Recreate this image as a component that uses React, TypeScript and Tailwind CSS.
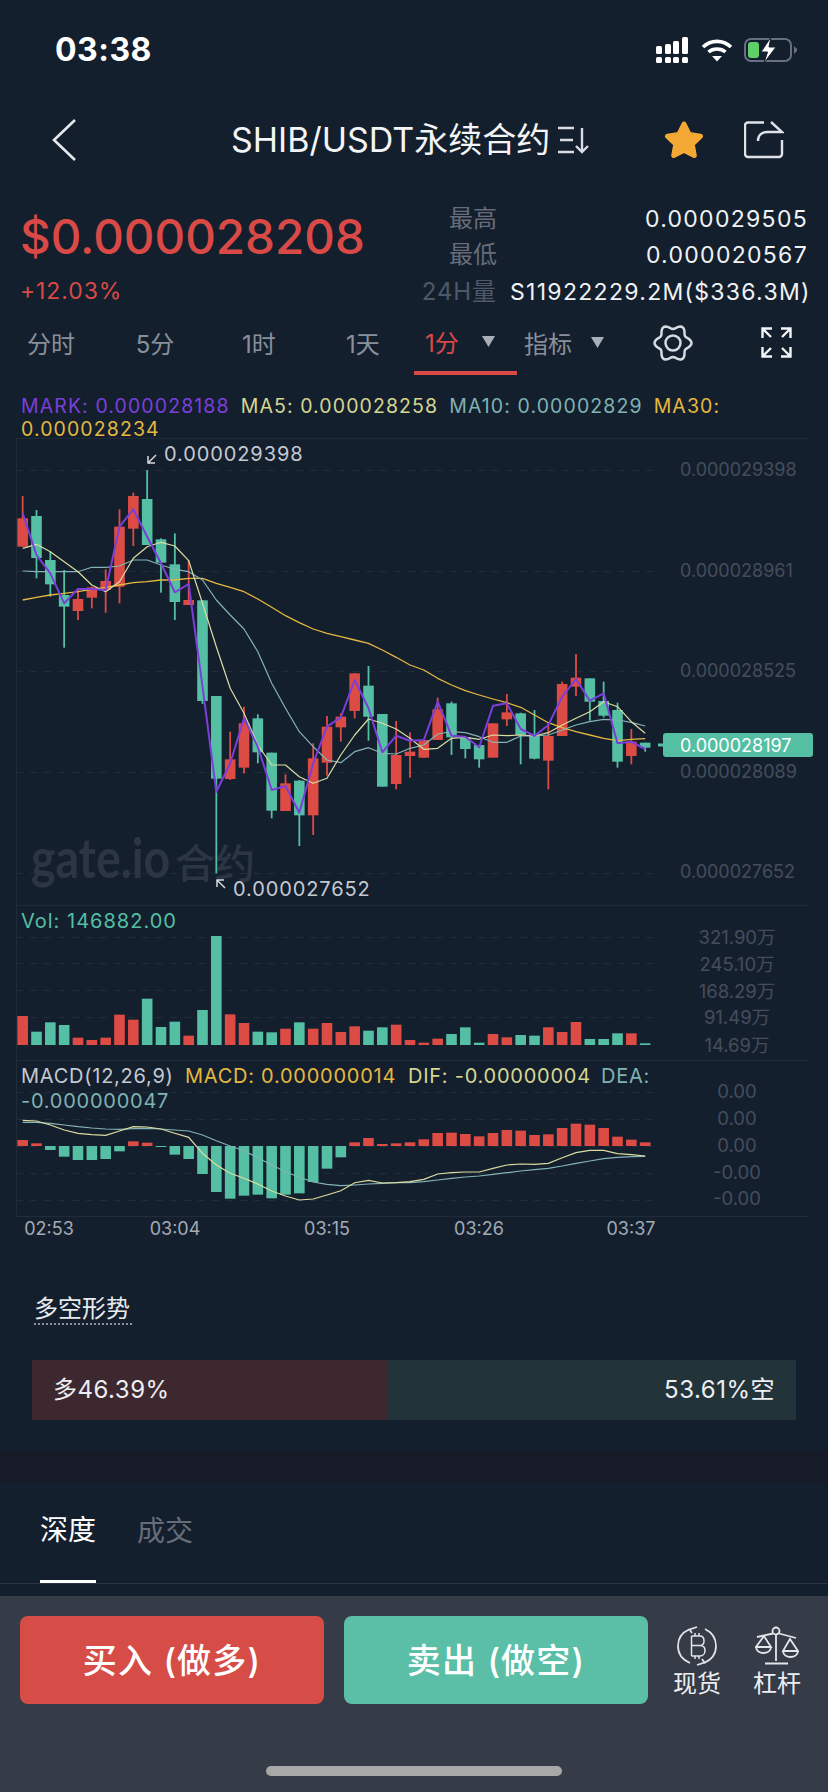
import React from "react";

const UP = "#dd4b45";
const DN = "#55bfa4";

// [colour, wickTop, wickBottom, bodyTop, bodyBottom] in 3x crop coordinates
const candles: [string, number, number, number, number][] = [
  ["r", 198, 350, 265, 350], ["g", 240, 445, 258, 384], ["g", 365, 500, 390, 463], ["g", 420, 653, 495, 530],
  ["r", 475, 570, 507, 543], ["r", 470, 535, 472, 503], ["r", 418, 548, 453, 480], ["r", 238, 520, 290, 470],
  ["r", 188, 348, 198, 296], ["g", 120, 345, 207, 345], ["g", 325, 488, 328, 398], ["g", 310, 570, 403, 516],
  ["r", 390, 525, 510, 525], ["g", 510, 822, 511, 813], ["g", 798, 1330, 798, 1046], ["r", 905, 1050, 988, 1047],
  ["r", 830, 1030, 880, 1013], ["g", 853, 1000, 865, 967], ["g", 968, 1165, 968, 1142], ["r", 1033, 1143, 1060, 1143],
  ["g", 1050, 1248, 1052, 1156], ["r", 940, 1215, 985, 1156], ["r", 858, 1037, 890, 998], ["r", 850, 935, 860, 892],
  ["r", 730, 865, 730, 843], ["g", 708, 932, 767, 860], ["g", 852, 1070, 852, 1070], ["r", 873, 1078, 975, 1062],
  ["r", 907, 1043, 965, 978], ["r", 930, 983, 930, 983], ["r", 803, 930, 838, 930], ["g", 815, 975, 820, 922],
  ["g", 922, 985, 922, 957], ["g", 945, 1013, 945, 988], ["r", 880, 983, 880, 983], ["r", 792, 888, 847, 868],
  ["g", 848, 1003, 850, 915], ["g", 840, 988, 918, 986], ["r", 880, 1078, 918, 992], ["r", 755, 918, 762, 918],
  ["r", 672, 798, 743, 770], ["g", 745, 872, 745, 815], ["g", 755, 862, 813, 857], ["g", 818, 1013, 840, 995],
  ["r", 897, 1003, 935, 978], ["g", 938, 965, 938, 953],
];

const xAt = (i: number) => (68 + i * 41.5) / 3;

const mark = [250, 375, 430, 520, 477, 477, 480, 290, 238, 320, 400, 487, 462, 770, 1085, 1000, 865, 950, 1080, 1068, 1148, 1000, 890, 862, 750, 835, 967, 917, 932, 930, 815, 917, 920, 952, 827, 820, 897, 918, 885, 800, 747, 812, 790, 940, 935, 957];
const ma5 = [355, 343, 365, 395, 425, 465, 485, 455, 385, 350, 337, 348, 392, 520, 650, 775, 850, 945, 1005, 1005, 1040, 1060, 1045, 975, 915, 867, 880, 897, 925, 958, 955, 925, 922, 928, 915, 917, 915, 918, 908, 885, 865, 845, 815, 830, 875, 910];
const ma10 = [423, 425, 425, 425, 425, 412, 412, 408, 390, 390, 405, 418, 425, 450, 510, 555, 597, 665, 760, 835, 905, 950, 990, 998, 965, 953, 970, 972, 955, 945, 912, 905, 908, 920, 937, 937, 918, 918, 915, 900, 885, 875, 868, 870, 877, 888];
const ma30 = [510, 502, 495, 490, 485, 478, 472, 465, 458, 455, 450, 450, 445, 445, 460, 472, 485, 507, 532, 557, 578, 597, 610, 620, 630, 640, 660, 682, 705, 720, 745, 765, 782, 795, 807, 818, 832, 855, 878, 893, 905, 915, 925, 932, 928, 926];

const volTops: [string, number][] = [
  ["r", 348], ["g", 395], ["g", 367], ["g", 375], ["r", 413], ["r", 420], ["r", 413], ["r", 344], ["r", 359], ["g", 296], ["g", 381], ["g", 365], ["r", 407], ["g", 330], ["g", 108], ["r", 343], ["r", 369], ["g", 395], ["g", 397], ["r", 386], ["g", 367], ["r", 386], ["r", 369], ["r", 396], ["r", 379], ["g", 392], ["g", 382], ["r", 374], ["r", 420], ["r", 428], ["r", 416], ["g", 402], ["g", 382], ["g", 428], ["r", 402], ["r", 412], ["g", 405], ["g", 407], ["r", 382], ["r", 396], ["r", 366], ["g", 417], ["g", 417], ["g", 400], ["r", 400], ["g", 430],
];

const macdBars = [720, 730, 750, 770, 780, 780, 777, 754, 724, 728, 741, 764, 777, 822, 876, 896, 887, 884, 895, 884, 880, 846, 806, 772, 727, 714, 732, 730, 727, 718, 699, 698, 702, 709, 699, 690, 692, 705, 703, 684, 671, 674, 684, 710, 719, 727];
const dif = [661, 663, 675, 690, 700, 704, 706, 693, 680, 681, 687, 700, 712, 760, 795, 820, 835, 852, 873, 888, 900, 897, 885, 872, 848, 841, 849, 848, 845, 838, 822, 818, 816, 816, 805, 795, 792, 793, 790, 773, 758, 751, 751, 761, 764, 768];
const dea = [667, 667, 670, 675, 680, 684, 687, 688, 686, 685, 687, 690, 693, 705, 722, 738, 752, 773, 795, 815, 832, 846, 853, 857, 855, 852, 850, 848, 848, 845, 840, 835, 831, 828, 823, 818, 813, 809, 805, 798, 790, 783, 776, 772, 770, 769];

const py = (z: number) => z / 3 - 8;
const vy = (z: number) => z / 3 + 462;

const line = (vals: number[], conv: (z: number) => number) =>
  vals.map((v, i) => `${xAt(i).toFixed(1)},${conv(v).toFixed(1)}`).join(" ");

const gearPath = (() => {
  const pts: string[] = [];
  for (let a = 0; a < 360; a += 5) {
    const t = (a * Math.PI) / 180;
    const r = 16.2 + 2.3 * Math.cos(6 * t);
    pts.push(`${(20 + r * Math.cos(t)).toFixed(2)},${(20 + r * Math.sin(t)).toFixed(2)}`);
  }
  return "M" + pts.join("L") + "Z";
})();

function Tri() {
  return (
    <svg width="13" height="11" viewBox="0 0 13 11" className="shrink-0 -mt-[4px]">
      <polygon points="0,0 13,0 6.5,11" fill="#a9afb8" />
    </svg>
  );
}

function StatusBar() {
  return (
    <div className="h-[100px] flex items-center justify-between pl-[55px] pr-[31px] shrink-0">
      <span className="text-[32px] font-bold text-white tracking-[0.5px] -mt-[1px]">03:38</span>
      <div className="flex items-center gap-[12px]">
        <svg width="34" height="26" viewBox="0 0 34 26" fill="#fff">
          <rect x="1" y="20" width="6" height="6" rx="1.5" />
          <rect x="10" y="20" width="6" height="6" rx="1.5" />
          <rect x="18" y="20" width="6" height="6" rx="1.5" />
          <rect x="27" y="20" width="6" height="6" rx="1.5" />
          <rect x="1" y="9" width="6" height="8" rx="1.5" />
          <rect x="10" y="7" width="6" height="10" rx="1.5" />
          <rect x="18" y="4" width="6" height="13" rx="1.5" />
          <rect x="27" y="0" width="6" height="17" rx="1.5" />
        </svg>
        <svg width="32" height="23" viewBox="0 0 32 23" fill="none" stroke="#fff" strokeWidth="3.6">
          <path d="M2 8 C10 0.5 22 0.5 30 8" />
          <path d="M7.5 13 C12 9 20 9 24.5 13" />
          <polygon points="16,22.5 11,17 21,17" fill="#fff" stroke="none" />
        </svg>
        <svg width="53" height="26" viewBox="0 0 53 26" fill="none" className="-ml-[1px]">
          <rect x="1" y="2" width="46" height="22" rx="6" stroke="#667080" strokeWidth="2" />
          <rect x="4" y="5" width="11" height="16" rx="3" fill="#5fd068" />
          <polygon points="50,9 53,12 53,14 50,17" fill="#667080" />
          <polygon points="27,0 17,15 23.5,15 20,26 32,10 25,10" fill="#fff" stroke="#141f2e" strokeWidth="1" />
        </svg>
      </div>
    </div>
  );
}

function NavBar() {
  return (
    <div className="h-[80px] flex items-center relative shrink-0">
      <svg width="26" height="42" viewBox="0 0 26 42" fill="none" className="ml-[52px]">
        <path d="M23 1 L2 21 L23 41" stroke="#e6e9ed" strokeWidth="2.6" />
      </svg>
      <div className="ml-[153px] flex items-center text-[34px] leading-none text-[#f3f5f7] whitespace-nowrap">
        <span>SHIB/USDT永续合约</span>
        <svg width="34" height="28" viewBox="0 0 34 28" fill="none" stroke="#d9dde3" strokeWidth="2.4" className="ml-[7px]">
          <path d="M1 2 H17 M3 14 H16 M1 26 H17" />
          <path d="M25 2 V26 M19 20 L25 26 L31 20" />
        </svg>
      </div>
      <svg width="40" height="40" viewBox="0 0 40 40" className="ml-[auto]">
        <polygon points="20,4 25.2,14.5 36.5,16.2 28.2,24.3 30.3,35.5 20,30.2 9.7,35.5 11.8,24.3 3.5,16.2 14.8,14.5" fill="#f5a935" stroke="#f5a935" strokeWidth="5" strokeLinejoin="round" />
      </svg>
      <svg width="40" height="38" viewBox="0 0 40 38" fill="none" stroke="#dfe3e8" strokeWidth="2.4" className="ml-[40px] mr-[44px]">
        <path d="M20 1.5 H4 a3 3 0 0 0 -3 3 V33 a3 3 0 0 0 3 3 H35 a3 3 0 0 0 3 -3 V19" />
        <path d="M14 20 C14 14 18 11 24 11 H38 L27 1" />
      </svg>
    </div>
  );
}

function Stats() {
  const rows: [string, string][] = [
    ["最高", "0.000029505"],
    ["最低", "0.000020567"],
    ["24H量", "S11922229.2M($336.3M)"],
  ];
  return (
    <div className="h-[110px] flex justify-between pl-[20px] pr-[20px] pt-[1px] shrink-0">
      <div className="flex flex-col">
        <div className="text-[47.5px] leading-[72px] font-medium text-[#d94a46] whitespace-nowrap">$0.000028208</div>
        <div className="text-[23px] leading-[36px] tracking-[0.9px] text-[#d94a46]">+12.03%</div>
      </div>
      <div className="flex flex-col">
        {rows.map(([k, v], i) => (
          <div key={k} className="h-[36.5px] flex items-center justify-between gap-[13px]">
            <span className={`text-[24px] w-[130px] text-right whitespace-nowrap ${i === 2 ? "text-[#4f5866] tracking-[0.9px]" : "text-[#666d78]"}`}>{k}</span>
            <span className="text-[23px] tracking-[1.3px] text-[#f0f2f4] text-right w-[298px] whitespace-nowrap">{v}</span>
          </div>
        ))}
      </div>
    </div>
  );
}

function Tabs() {
  const t = ["分时", "5分", "1时", "1天"];
  return (
    <div className="h-[65px] flex items-center -ml-[1px] text-[24px] text-[#8a909a] shrink-0">
      {t.map((s) => (
        <div key={s} className="w-[104px] text-center pt-[4px]">{s}</div>
      ))}
      <div className="w-[103px] -ml-[1px] h-full flex items-center pl-[11px] gap-[23px] border-b-4 border-[#d94a46] pt-[6px] text-[#d94a46]">
        <span>1分</span>
        <Tri />
      </div>
      <div className="w-[138px] flex items-center pl-[7px] gap-[19px] pt-[4px]">
        <span>指标</span>
        <Tri />
      </div>
      <svg width="40" height="40" viewBox="0 0 40 40" fill="none" stroke="#d5dae0" strokeWidth="2.5" className="-ml-[2px]">
        <path d={gearPath} strokeLinejoin="round" />
        <circle cx="20" cy="20" r="7.5" />
      </svg>
      <svg width="31" height="31" viewBox="0 0 31 31" fill="none" stroke="#f4f5f6" strokeWidth="2.4" className="ml-[68px]">
        <path d="M1.5 11 V1.5 H11 M1.5 1.5 L10 10" />
        <path d="M20 1.5 H29.5 V11 M29.5 1.5 L21 10" />
        <path d="M1.5 20 V29.5 H11 M1.5 29.5 L10 21" />
        <path d="M20 29.5 H29.5 V20 M29.5 29.5 L21 21" />
      </svg>
    </div>
  );
}

function Legend() {
  return (
    <div className="h-[63px] pt-[20px] pl-[21px] pr-[100px] text-[19.5px] leading-[23px] tracking-[1.1px] shrink-0">
      <span className="text-[#7b3fd9] mr-[11px]">MARK: 0.000028188</span>
      <span className="text-[#d6d691] mr-[11px]">MA5: 0.000028258</span>
      <span className="text-[#7fb2b2] mr-[11px]">MA10: 0.00002829</span>
      <span className="text-[#e5b83f]">MA30:</span>
      <br />
      <span className="text-[#e5b83f]">0.000028234</span>
    </div>
  );
}

function Chart() {
  const gridY = [119, 422, 723, 1025, 1328].map(py);
  const volGrid = [110, 190, 271, 352].map(vy);
  const macdGrid = [577, 658, 738, 818, 899].map(vy);
  const axis: [string, number][] = [["0.000029398", 469], ["0.000028961", 569.5], ["0.000028525", 670], ["0.000028089", 771], ["0.000027652", 871]];
  const volAxis: [string, number][] = [["321.90万", 937], ["245.10万", 964], ["168.29万", 991], ["91.49万", 1017], ["14.69万", 1045]];
  const macdAxis: [string, number][] = [["0.00", 1091], ["0.00", 1118], ["0.00", 1145], ["-0.00", 1172], ["-0.00", 1198]];
  const times: [string, number][] = [["02:53", 49], ["03:04", 175], ["03:15", 327], ["03:26", 479], ["03:37", 631]];
  const Y = (v: number) => v - 438;
  return (
    <svg width="828" height="807" viewBox="0 0 828 807" className="block shrink-0">
      <g stroke="#212c3a" strokeWidth="1">
        <path d="M16 0.5 H809 M16 467.5 H809 M16 622.5 H809 M16 778.5 H809 M16.5 0 V778" />
      </g>
      <g stroke="#222d3c" strokeWidth="1" strokeDasharray="7 7">
        {[...gridY, ...volGrid, ...macdGrid].map((y, i) => (
          <line key={i} x1="16" x2="656" y1={Math.round(y) + 0.5} y2={Math.round(y) + 0.5} />
        ))}
      </g>

      <text transform={`translate(31 ${Y(878)}) scale(1 1.19)`} fontSize="46.5" fontWeight="700" fill="#2c3543" className="[font-family:Lato,sans-serif]">gate.io</text>
      <text x="175" y={Y(878)} fontSize="40" fontWeight="500" fill="#2c3543" className="[font-family:'Noto_Sans_CJK_SC',sans-serif]">合约</text>

      {candles.map(([c, wt, wb, bt, bb], i) => {
        const col = c === "r" ? UP : DN;
        const x = xAt(i);
        return (
          <g key={i} fill={col}>
            <rect x={x - 0.9} y={py(wt)} width="1.8" height={(wb - wt) / 3} />
            <rect x={x - 5.3} y={py(bt)} width="10.6" height={Math.max(1.5, (bb - bt) / 3)} />
          </g>
        );
      })}

      <g fill="none" strokeLinejoin="round">
        <polyline points={line(ma30, py)} stroke="#e5b83f" strokeWidth="1.3" />
        <polyline points={line(ma10, py)} stroke="#84b3b5" strokeWidth="1.2" />
        <polyline points={line(ma5, py)} stroke="#dcdca0" strokeWidth="1.2" />
        <polyline points={line(mark, py)} stroke="#7b3fd9" strokeWidth="2" />
      </g>

      <g stroke="#d5d9df" strokeWidth="1.5" fill="none">
        <path d="M156 455 L148 463 M148 456 V463 H155" transform="translate(0 -438)" />
        <path d="M225 888 L217 880 M217 887 V880 H224" transform="translate(0 -438)" />
      </g>
      <g fontSize="20" fill="#c4c9d0" letterSpacing="0.9">
        <text x="164" y={Y(461)}>0.000029398</text>
        <text x="233" y={Y(896)}>0.000027652</text>
      </g>

      <g fontSize="18" fill="#454d5b">
        {axis.map(([t, y]) => (
          <text key={t} x="680" y={Y(y + 7)}>{t}</text>
        ))}
      </g>
      <rect x="658" y={Y(743.5)} width="5" height="3" fill={DN} />
      <rect x="663" y={Y(733)} width="150" height="24" rx="3" fill={DN} />
      <text x="680" y={Y(752)} fontSize="18" fill="#fff">0.000028197</text>

      <text x="21" y={Y(928)} fontSize="20" fill={DN} letterSpacing="1">Vol: 146882.00</text>
      {volTops.map(([c, t], i) => (
        <rect key={i} x={xAt(i) - 5.3} y={vy(t)} width="10.6" height={(435 - t) / 3} fill={c === "r" ? UP : DN} />
      ))}
      <g fontSize="18.5" fill="#454d5b" textAnchor="middle">
        {volAxis.map(([t, y]) => (
          <text key={t} x="737" y={Y(y + 7)}>{t}</text>
        ))}
      </g>

      <g fontSize="20" letterSpacing="0.75">
        <text x="21" y={Y(1083)} fill="#c4c9d0">MACD(12,26,9)</text>
        <text x="185" y={Y(1083)} fill="#e5b83f">MACD: 0.000000014</text>
        <text x="408" y={Y(1083)} fill="#d6d691">DIF: -0.00000004</text>
        <text x="601" y={Y(1083)} fill="#7fb2b2">DEA:</text>
        <text x="21" y={Y(1108)} fill="#7fb2b2">-0.000000047</text>
      </g>
      {macdBars.map((b, i) => {
        const zero = 738;
        const top = Math.min(b, zero);
        return (
          <rect key={i} x={xAt(i) - 5.3} y={vy(top)} width="10.6" height={Math.max(1, Math.abs(b - zero) / 3)} fill={b < zero ? UP : DN} />
        );
      })}
      <polyline points={line(dea, vy)} fill="none" stroke="#84b3b5" strokeWidth="1.2" />
      <polyline points={line(dif, vy)} fill="none" stroke="#dcdca0" strokeWidth="1.2" />
      <g fontSize="18.5" fill="#454d5b" textAnchor="middle">
        {macdAxis.map(([t, y], i) => (
          <text key={i} x="737" y={Y(y + 7)}>{t}</text>
        ))}
      </g>

      <g fontSize="18" fill="#a4aab4" textAnchor="middle">
        {times.map(([t, x]) => (
          <text key={t} x={x} y={Y(1235)}>{t}</text>
        ))}
      </g>
    </svg>
  );
}

function LongShort() {
  return (
    <div className="h-[206px] px-[32px] pt-[50px] shrink-0">
      <div className="w-fit ml-[2px] pr-[2px] text-[24px] leading-[28px] text-[#e8ebee] border-b-2 border-dotted border-[#8d939c]">多空形势</div>
      <div className="mt-[35px] flex h-[60px] items-center text-[24px] tracking-[0.5px] text-[#eceef1]">
        <div className="w-[355px] h-full bg-[#3d2830] flex items-center pl-[21px]">多46.39%</div>
        <div className="flex-1 h-full bg-[#22333a] flex items-center justify-end pr-[21px]">53.61%空</div>
      </div>
    </div>
  );
}

function Depth() {
  return (
    <div className="h-[113px] shrink-0">
      <div className="h-[101px] flex pl-[40px] gap-[41px] border-b border-[#2a3442]">
        <div className="h-full w-[56px] flex items-center justify-center border-b-[3px] border-white text-[28px] text-white pb-[4px]">深度</div>
        <div className="h-full w-[56px] flex items-center justify-center text-[28px] text-[#676d78] pb-[4px]">成交</div>
      </div>
    </div>
  );
}

function BottomBar() {
  return (
    <div className="flex-1 bg-[#353b47] relative">
      <div className="flex pl-[20px] pt-[20px]">
        <button className="w-[304px] h-[88px] rounded-[8px] bg-[#d64d48] text-white text-[34px] font-medium tracking-[1.2px]">买入 (做多)</button>
        <button className="ml-[20px] w-[304px] h-[88px] rounded-[8px] bg-[#5abfa6] text-white text-[34px] font-medium tracking-[1.2px]">卖出 (做空)</button>
        <div className="ml-[25px] w-[48px] flex flex-col items-center">
          <svg width="40" height="40" viewBox="0 0 40 40" fill="none" stroke="#e4e7ea" strokeWidth="1.7" className="mt-[10px]">
            <path d="M12 3.5 C4 7 1 13 1 20 C1 28 6 34 13 37" />
            <path d="M28 3 C36 7 39 13 39 20 C39 28 34 34 27 37" />
            <path d="M20 1 L12.5 3.5 L15 7 M20 39 L27.5 36.5 L25 33" />
            <path d="M14.5 10 H23 C26 10 27 12.5 27 15 C27 17.5 25.5 19.5 23 19.5 H14.5 M23 19.5 C26.5 19.5 28 22 28 24.5 C28 27.5 26 30 23 30 H14.5 M14.5 10 V30 M18 7 V10 M22 7 V10 M18 30 V33 M22 30 V33" strokeWidth="1.5" />
          </svg>
          <span className="text-[24px] leading-[32px] mt-[2px] text-[#eceef1] whitespace-nowrap">现货</span>
        </div>
        <div className="ml-[32px] w-[48px] flex flex-col items-center">
          <svg width="44" height="40" viewBox="0 0 44 40" fill="none" stroke="#e4e7ea" strokeWidth="1.8" className="mt-[10px]">
            <circle cx="21" cy="5" r="3.5" />
            <path d="M21 9 V35 M10 37.5 H33" />
            <path d="M2 11 L18 7.5 M24 7.5 L41 12" />
            <path d="M9 10 L1 21 H16 Z" />
            <path d="M1 21 C1.5 29 15.5 29 16 21" />
            <path d="M35 13 L28 25 H43 Z" />
            <path d="M28 25 C28.5 33 42.5 33 43 25" />
          </svg>
          <span className="text-[24px] leading-[32px] mt-[2px] text-[#eceef1] whitespace-nowrap">杠杆</span>
        </div>
      </div>
      <div className="absolute left-[266px] top-[170px] w-[296px] h-[10px] rounded-full bg-[#a8a8a8]" />
    </div>
  );
}

export default function App() {
  return (
    <div className="w-[828px] h-[1792px] overflow-hidden flex flex-col bg-[#141f2e] [font-family:Inter,'Noto_Sans_CJK_SC',sans-serif]">
      <StatusBar />
      <NavBar />
      <div className="h-[20px] shrink-0" />
      <Stats />
      <Tabs />
      <Legend />
      <Chart />
      <LongShort />
      <div className="h-[32px] bg-[#171b27] shrink-0" />
      <Depth />
      <BottomBar />
    </div>
  );
}
